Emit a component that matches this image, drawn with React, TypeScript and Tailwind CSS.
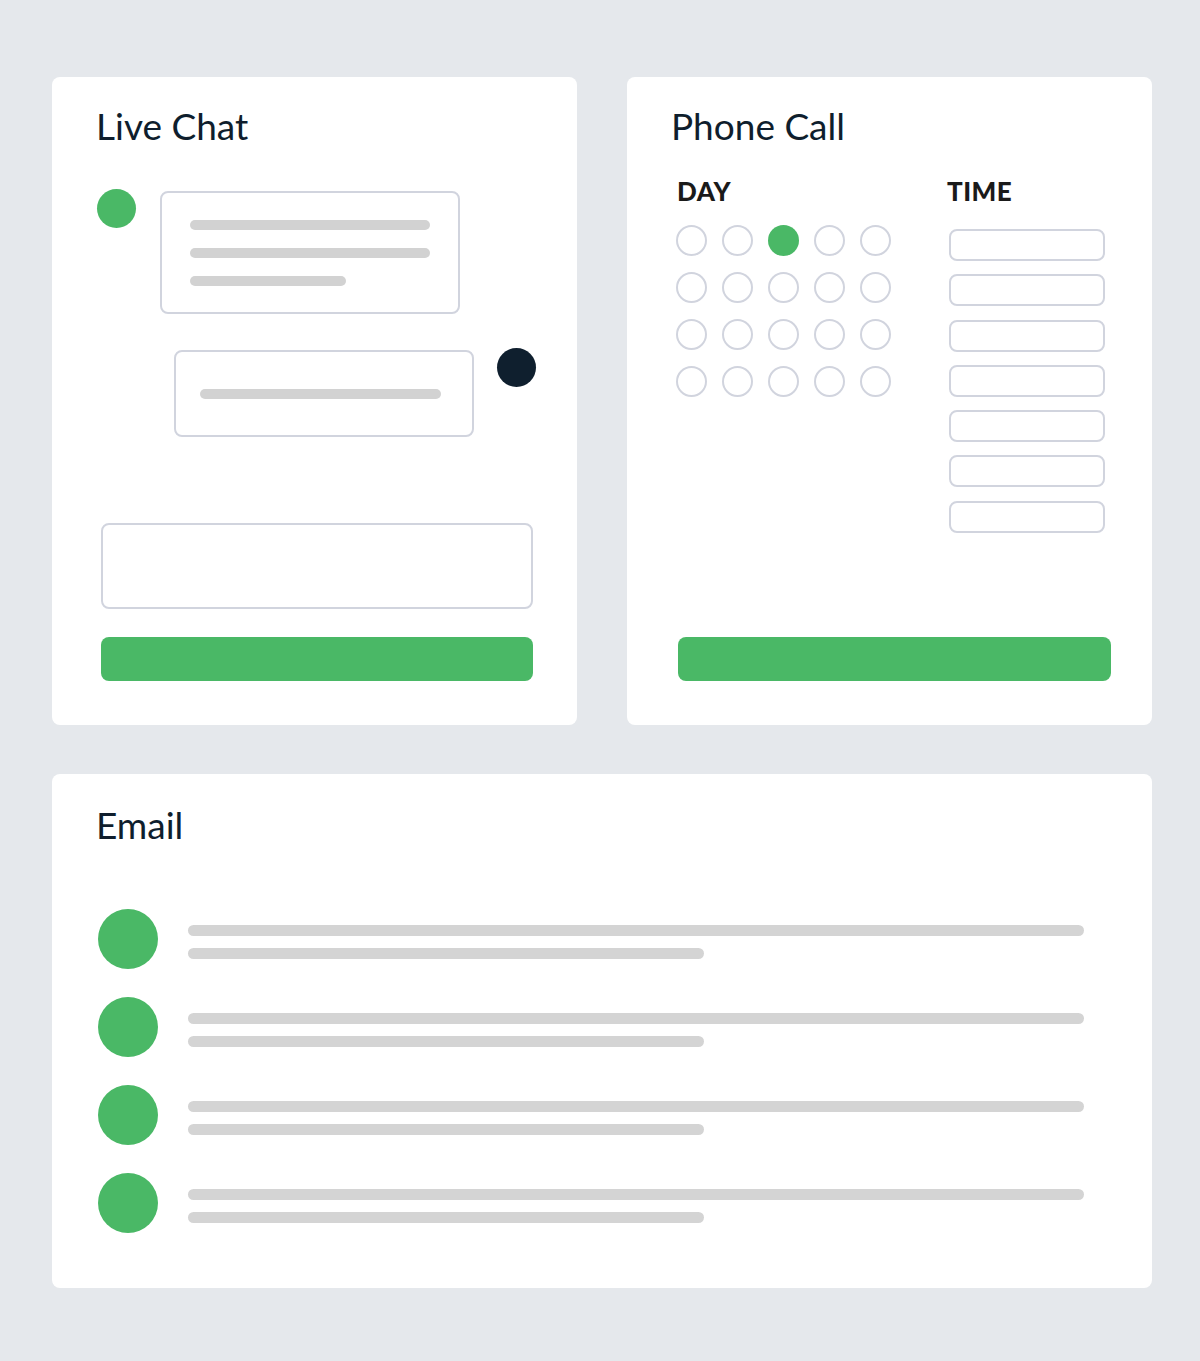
export default function App() {
  const days = Array.from({ length: 20 }, (_, i) => i);
  const times = Array.from({ length: 7 }, (_, i) => i);
  const emails = Array.from({ length: 4 }, (_, i) => i);

  return (
    <div className="min-h-[1361px] w-[1200px] bg-[#e5e8ec] pl-[52px] pr-[48px] pt-[77px] pb-[73px] font-['Lato',sans-serif]">
      <div className="grid grid-cols-2 gap-[50px]">
        {/* Live Chat */}
        <section className="flex h-[648px] flex-col rounded-lg bg-white pb-[44px]">
          <h2 className="pl-[44px] pt-[27px] text-[37px] leading-[44px] text-[#0f1e2d]">Live Chat</h2>
          <div className="mt-[41px] flex items-start pl-[45px]">
            <div className="h-[39px] w-[39px] rounded-full bg-[#4ab866]" />
            <div className="mt-[2px] ml-[24px] flex w-[300px] flex-col gap-[18px] rounded-lg border-2 border-[#d1d4de] pt-[27px] pb-[26px] pl-[28px]">
              <div className="h-[10px] w-[240px] rounded-full bg-[#d2d2d2]" />
              <div className="h-[10px] w-[240px] rounded-full bg-[#d2d2d2]" />
              <div className="h-[10px] w-[156px] rounded-full bg-[#d2d2d2]" />
            </div>
          </div>
          <div className="mt-[34px] flex items-start pl-[122px]">
            <div className="mt-[2px] flex h-[87px] w-[300px] items-center rounded-lg border-2 border-[#d1d4de] pl-[24px]">
              <div className="h-[10px] w-[241px] rounded-full bg-[#d2d2d2]" />
            </div>
            <div className="ml-[23px] h-[39px] w-[39px] rounded-full bg-[#0f1f2e]" />
          </div>
          <div className="mt-auto pl-[49px] pr-[44px]">
            <div className="h-[86px] rounded-lg border-2 border-[#d1d4de]" />
            <div className="mt-[28px] h-[44px] rounded-lg bg-[#4ab866]" />
          </div>
        </section>

        {/* Phone Call */}
        <section className="flex h-[648px] flex-col rounded-lg bg-white pb-[44px]">
          <h2 className="pl-[44px] pt-[27px] text-[37px] leading-[44px] text-[#0f1e2d]">Phone Call</h2>
          <div className="mt-[28px] flex pl-[49px]">
            <div>
              <div className="pl-[1px] text-[26px] font-black leading-[30px] tracking-[0.5px] text-[#1a1a1a]">DAY</div>
              <div className="mt-[19px] grid grid-cols-[repeat(5,31px)] gap-x-[15px] gap-y-[16px]">
                {days.map((d) => (
                  <div
                    key={d}
                    className={
                      d === 2
                        ? "h-[31px] w-[31px] rounded-full bg-[#4ab866]"
                        : "h-[31px] w-[31px] rounded-full border-2 border-[#d1d4de]"
                    }
                  />
                ))}
              </div>
            </div>
            <div className="ml-[56px]">
              <div className="text-[26px] font-black leading-[30px] tracking-[0.5px] text-[#1a1a1a]">TIME</div>
              <div className="mt-[23px] ml-[2px] flex flex-col gap-[13.3px]">
                {times.map((t) => (
                  <div key={t} className="h-[32px] w-[156px] rounded-lg border-2 border-[#d1d4de]" />
                ))}
              </div>
            </div>
          </div>
          <div className="mt-auto pl-[51px] pr-[41px]">
            <div className="h-[44px] rounded-lg bg-[#4ab866]" />
          </div>
        </section>
      </div>

      {/* Email */}
      <section className="mt-[49px] rounded-lg bg-white pb-[55px]">
        <h2 className="pl-[44px] pt-[29px] text-[37px] leading-[44px] text-[#0f1e2d]">Email</h2>
        <div className="mt-[62px] flex flex-col gap-[28px] pl-[46px]">
          {emails.map((e) => (
            <div key={e} className="flex items-center">
              <div className="h-[60px] w-[60px] rounded-full bg-[#4ab866]" />
              <div className="ml-[30px] mt-[6px] flex flex-col gap-[12px]">
                <div className="h-[11px] w-[896px] rounded-full bg-[#d4d4d4]" />
                <div className="h-[11px] w-[516px] rounded-full bg-[#d4d4d4]" />
              </div>
            </div>
          ))}
        </div>
      </section>
    </div>
  );
}
